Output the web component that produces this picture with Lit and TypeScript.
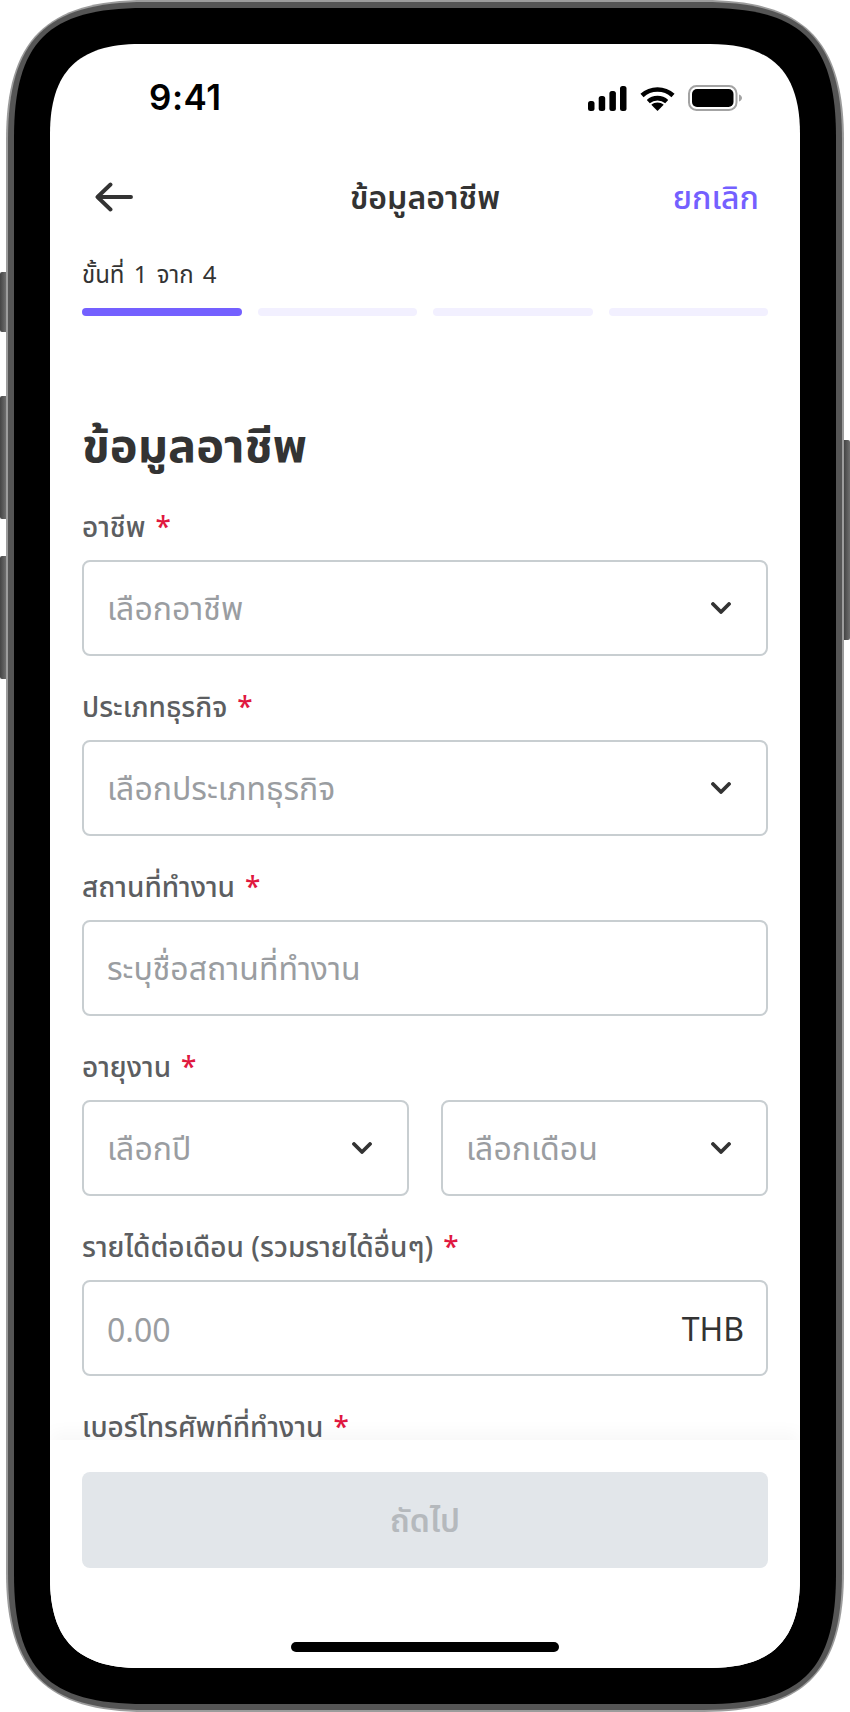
import { LitElement, css, html, svg } from 'lit'
import { customElement } from 'lit/decorators.js'

interface Field {
  placeholder: string
  select?: boolean
  suffix?: string
}

interface Row {
  label: string
  fields: Field[]
}

// the last row's input sits behind the footer, only its label shows
const rows: Row[] = [
  { label: 'อาชีพ', fields: [{ placeholder: 'เลือกอาชีพ', select: true }] },
  { label: 'ประเภทธุรกิจ', fields: [{ placeholder: 'เลือกประเภทธุรกิจ', select: true }] },
  { label: 'สถานที่ทำงาน', fields: [{ placeholder: 'ระบุชื่อสถานที่ทำงาน' }] },
  {
    label: 'อายุงาน',
    fields: [
      { placeholder: 'เลือกปี', select: true },
      { placeholder: 'เลือกเดือน', select: true },
    ],
  },
  { label: 'รายได้ต่อเดือน (รวมรายได้อื่นๆ)', fields: [{ placeholder: '0.00', suffix: 'THB' }] },
  { label: 'เบอร์โทรศัพท์ที่ทำงาน', fields: [] },
]

const chevron = svg`<svg class="chevron" width="20" height="12" viewBox="0 0 20 12" fill="none">
  <path d="M2 2l8 8 8-8" stroke="#333" stroke-width="3.8" stroke-linecap="round" stroke-linejoin="round" />
</svg>`

@customElement('app-root')
export class AppRoot extends LitElement {
  private renderField(field: Field) {
    return html`
      <div class="field">
        <span class="placeholder">${field.placeholder}</span>
        ${field.select ? chevron : ''}
        ${field.suffix ? html`<span class="suffix">${field.suffix}</span>` : ''}
      </div>
    `
  }

  private renderStatus() {
    return html`
      <div class="status">
        <span class="time">9:41</span>
        <div class="status-icons">
          <svg width="39" height="25" viewBox="0 0 39 25" fill="#000">
            <rect x="0" y="15" width="6.5" height="10" rx="2.500" />
            <rect x="10.700" y="10" width="6.5" height="15" rx="2.500" />
            <rect x="21.400" y="5" width="6.5" height="20" rx="2.500" />
            <rect x="32" y="0" width="6.5" height="25" rx="2.500" />
          </svg>
          <svg width="35" height="25" viewBox="0 0 35 25" fill="none" stroke="#000" stroke-width="4.6">
            <path d="M2 9.500C10.800 1.500 24.200 1.500 33 9.500" />
            <path d="M8.300 15.600c5.200-4.600 13.200-4.600 18.400 0" />
            <path d="M17.500 25l-6.200-6.200c3.500-3.200 8.900-3.200 12.400 0z" fill="#000" stroke="none" />
          </svg>
          <svg width="55" height="26" viewBox="0 0 55 26">
            <rect x="1" y="1" width="47.500" height="24" rx="7.500" fill="none" stroke="#a3a3a3" stroke-width="2" />
            <rect x="4" y="4" width="41.500" height="18" rx="5" fill="#000" />
            <path d="M51 9.500v7c1.800-.6 3-2 3-3.500s-1.200-2.900-3-3.500z" fill="#a3a3a3" />
          </svg>
        </div>
      </div>
    `
  }

  protected render() {
    return html`
      <div class="device">
        <span class="key key-silent"></span>
        <span class="key key-up"></span>
        <span class="key key-down"></span>
        <span class="key key-power"></span>
        <div class="shell">
          <div class="rim">
            <div class="bezel">
              <div class="screen">
                ${this.renderStatus()}
                <div class="nav">
                  <svg class="back" width="38" height="30" viewBox="0 0 38 30" fill="none">
                    <path d="M36 15H3M15.500 2.500L2.500 15l13 12.500" stroke="#333" stroke-width="3.900" stroke-linecap="round" stroke-linejoin="round" />
                  </svg>
                  <span class="nav-title">ข้อมูลอาชีพ</span>
                  <span class="cancel">ยกเลิก</span>
                </div>
                <div class="steps">
                  <div class="step-label">ขั้นที่ 1 จาก 4</div>
                  <div class="step-bars">
                    <span class="bar active"></span>
                    <span class="bar"></span>
                    <span class="bar"></span>
                    <span class="bar"></span>
                  </div>
                </div>
                <div class="form">
                  <h1>ข้อมูลอาชีพ</h1>
                  ${rows.map(
                    (row) => html`
                      <div class="row">
                        <div class="label">${row.label}<span class="req">*</span></div>
                        <div class="inputs">${row.fields.map((f) => this.renderField(f))}</div>
                      </div>
                    `,
                  )}
                </div>
                <div class="footer">
                  <div class="next">ถัดไป</div>
                  <span class="home"></span>
                </div>
              </div>
            </div>
          </div>
        </div>
      </div>
    `
  }

  static styles = css`
    :host {
      display: block;
      width: 850px;
      height: 1712px;
      overflow: hidden;
      background: #fff;
      font-family: 'Noto Sans', 'Noto Sans Thai', 'Open Sans', sans-serif;
    }
    .device {
      position: relative;
      width: 838px;
      height: 1712px;
      margin-left: 6px;
    }
    .key {
      position: absolute;
      width: 6px;
      left: -6px;
      background: linear-gradient(90deg, #444, #6e6e6e);
      border-radius: 2px 0 0 2px;
    }
    .key-silent {
      top: 272px;
      height: 60px;
    }
    .key-up {
      top: 396px;
      height: 123px;
    }
    .key-down {
      top: 556px;
      height: 123px;
    }
    .key-power {
      left: auto;
      right: -6px;
      top: 440px;
      height: 200px;
      border-radius: 0 2px 2px 0;
    }
    /* continuous corners, a plain border-radius is too round here */
    .shell {
      height: 100%;
      box-sizing: border-box;
      padding: 2px;
      background: #9c9c9c;
      clip-path: path('M140 0H698C798 0 838 40 838 140V1572C838 1672 798 1712 698 1712H140C40 1712 0 1672 0 1572V140C0 40 40 0 140 0Z');
    }
    .rim {
      height: 100%;
      box-sizing: border-box;
      padding: 6px;
      background: #555;
      clip-path: path('M138 0H696C796 0 834 38 834 138V1570C834 1670 796 1708 696 1708H138C38 1708 0 1670 0 1570V138C0 38 38 0 138 0Z');
    }
    .bezel {
      height: 100%;
      box-sizing: border-box;
      padding: 36px;
      background: #000;
      clip-path: path('M130 0H692C788 0 822 34 822 130V1566C822 1662 788 1696 692 1696H130C34 1696 0 1662 0 1566V130C0 34 34 0 130 0Z');
    }
    .screen {
      display: flex;
      flex-direction: column;
      height: 100%;
      background: #fff;
      color: #333;
      clip-path: path('M90 0H660C722 0 750 28 750 90V1534C750 1596 722 1624 660 1624H90C28 1624 0 1596 0 1534V90C0 28 28 0 90 0Z');
    }
    .status {
      flex: none;
      display: flex;
      justify-content: space-between;
      align-items: center;
      height: 92px;
      padding: 16px 57px 0 99px;
      box-sizing: border-box;
    }
    .time {
      margin-top: -2px;
      font: 600 35px/40px Inter, sans-serif;
      letter-spacing: 0.5px;
      color: #000;
    }
    .status-icons {
      display: flex;
      align-items: center;
      gap: 13px;
    }
    .nav {
      flex: none;
      display: grid;
      grid-template-columns: 1fr auto 1fr;
      align-items: center;
      height: 64px;
      margin-top: 29px;
      padding: 0 43px;
    }
    .back {
      margin-left: 2px;
    }
    .nav-title {
      font-size: 32px;
      font-weight: 600;
      line-height: 40px;
    }
    .cancel {
      justify-self: end;
      margin-right: -2px;
      font-size: 32px;
      font-weight: 500;
      line-height: 40px;
      color: #7460ff;
    }
    .steps {
      flex: none;
      padding: 0 32px;
      margin-top: 27px;
    }
    .step-label {
      font-size: 24px;
      line-height: 36px;
      word-spacing: 3px;
    }
    .step-bars {
      display: flex;
      gap: 16px;
      margin-top: 16px;
    }
    .bar {
      flex: 1;
      height: 8px;
      border-radius: 4px;
      background: #f2f0ff;
    }
    .bar.active {
      background: #7460ff;
    }
    .form {
      flex: 1;
      min-height: 0;
      padding: 0 32px;
    }
    h1 {
      margin: 96px 0 0;
      font-size: 47px;
      font-weight: 700;
      line-height: 64px;
    }
    .row {
      margin-top: 12px;
      height: 168px;
    }
    h1 + .row {
      margin-top: 35px;
    }
    .row + .row {
      margin-top: 12px;
    }
    .label {
      font-size: 28px;
      font-weight: 500;
      line-height: 30px;
      color: #5c5e61;
    }
    .req {
      margin-left: 10px;
      color: #e0183f;
    }
    .inputs {
      display: flex;
      gap: 32px;
      margin-top: 19px;
    }
    .field {
      flex: 1;
      display: flex;
      justify-content: space-between;
      align-items: center;
      height: 96px;
      box-sizing: border-box;
      padding: 0 22px 0 23px;
      border: 2px solid #c8ced1;
      border-radius: 8px;
    }
    .placeholder {
      padding-top: 3px;
      font-size: 32px;
      color: #9a9da1;
    }
    .chevron {
      margin-right: 13px;
    }
    .suffix {
      font-size: 32px;
      color: #333;
    }
    .footer {
      position: relative;
      flex: none;
      height: 228px;
      box-sizing: border-box;
      padding: 32px 32px 0;
      background: #fff;
      box-shadow: 0 -8px 16px rgba(0, 0, 0, 0.03);
    }
    .next {
      height: 96px;
      border-radius: 8px;
      background: #e2e6ea;
      color: #b5b9bd;
      font-size: 32px;
      font-weight: 600;
      line-height: 96px;
      text-align: center;
    }
    .home {
      position: absolute;
      left: 241px;
      bottom: 16px;
      width: 268px;
      height: 10px;
      border-radius: 5px;
      background: #000;
    }
  `
}

declare global {
  interface HTMLElementTagNameMap {
    'app-root': AppRoot
  }
}
